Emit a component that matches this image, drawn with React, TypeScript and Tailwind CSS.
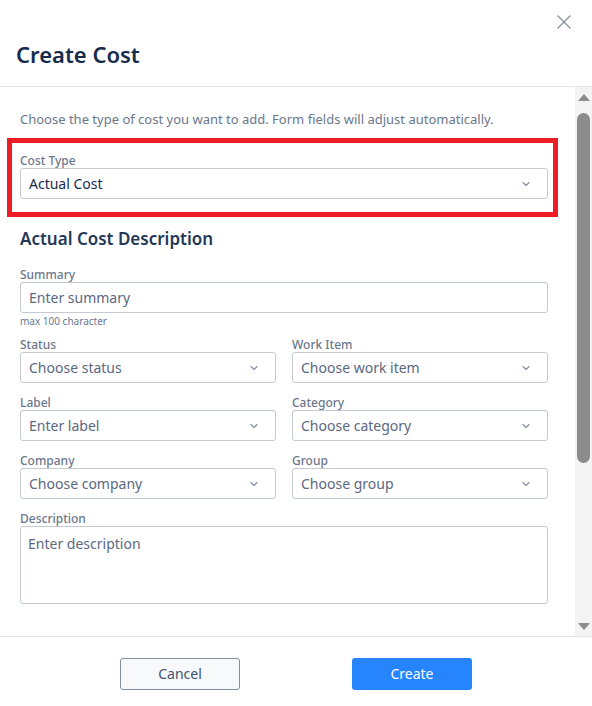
import { X, ChevronDown } from 'lucide-react';

const font = { fontFamily: '"Noto Sans", "Open Sans", Arial, sans-serif' };

function SelectBox({ value, placeholder = true }: { value: string; placeholder?: boolean }) {
  return (
    <div className="flex h-[31px] items-center justify-between rounded-[3px] border border-[#c4c9d2] bg-white pl-2 pr-[15px]">
      <span className={`text-[14px] leading-5 ${placeholder ? 'text-[#5b6882]' : 'text-[#172b4d]'}`}>{value}</span>
      <ChevronDown size={12} strokeWidth={2.5} className="text-[#8b93a5]" />
    </div>
  );
}

function Field({ label, value }: { label: string; value: string }) {
  return (
    <div className="flex flex-col">
      <label className="text-[12px] font-medium leading-[15px] text-[#6b778c]">{label}</label>
      <SelectBox value={value} />
    </div>
  );
}

export default function App() {
  return (
    <div className="flex h-[706px] w-[592px] flex-col bg-white" style={font}>
      <div className="relative h-[87px] shrink-0 border-b border-[#e1e4ea]">
        <h1 className="absolute left-[16px] top-[38px] text-[22px] font-semibold leading-8 text-[#172b4d]">Create Cost</h1>
        <button className="absolute right-[16px] top-[10px] text-[#8993a4]">
          <X size={24} strokeWidth={1.4} />
        </button>
      </div>

      <div className="flex min-h-0 flex-1">
        <div className="min-w-0 flex-1 overflow-hidden pl-[20px] pr-[27px] pt-[22px]">
          <p className="text-[13px] leading-5 text-[#6b778c]">
            Choose the type of cost you want to add. Form fields will adjust automatically.
          </p>

          <div className="-ml-[13px] -mr-[10px] mt-[9px] border-[5px] border-[#ee1c25] pb-[13px] pl-[8px] pr-[5px] pt-[10px]">
            <label className="block text-[12px] font-medium leading-[15px] text-[#6b778c]">Cost Type</label>
            <SelectBox value="Actual Cost" placeholder={false} />
          </div>

          <h2 className="mt-[9px] text-[17px] font-semibold leading-[26px] text-[#253858]">Actual Cost Description</h2>

          <div className="mt-[15px] flex flex-col">
            <label className="text-[12px] font-medium leading-[15px] text-[#6b778c]">Summary</label>
            <div className="flex h-[31px] items-center rounded-[3px] border border-[#c4c9d2] px-2">
              <span className="text-[14px] leading-5 text-[#5b6882]">Enter summary</span>
            </div>
            <span className="mt-[2px] text-[10px] leading-[12px] text-[#6b778c]">max 100 character</span>
          </div>

          <div className="mt-[10px] grid grid-cols-2 gap-x-[16px] gap-y-[12px]">
            <Field label="Status" value="Choose status" />
            <Field label="Work Item" value="Choose work item" />
            <Field label="Label" value="Enter label" />
            <Field label="Category" value="Choose category" />
            <Field label="Company" value="Choose company" />
            <Field label="Group" value="Choose group" />
          </div>

          <div className="mt-[13px] flex flex-col">
            <label className="text-[12px] font-medium leading-[14px] text-[#6b778c]">Description</label>
            <div className="h-[78px] rounded-[3px] border border-[#c4c9d2] px-[7px] py-[4px]">
              <span className="text-[14px] leading-5 text-[#5b6882]">Enter description</span>
            </div>
          </div>

          <h2 className="mt-[29px] text-[17px] font-semibold leading-[26px] text-[#253858]">Actual Cost Details</h2>
        </div>

        <div className="flex w-[17px] shrink-0 flex-col items-center bg-[#f4f4f4] pb-[6px] pt-[7px]">
          <div className="h-0 w-0 border-x-[6px] border-b-[7px] border-x-transparent border-b-[#8c8c8c]" />
          <div className="mt-[12px] h-[350px] w-[13px] rounded-full bg-[#8c8c8c]" />
          <div className="flex-1" />
          <div className="h-0 w-0 border-x-[6px] border-t-[7px] border-x-transparent border-t-[#8c8c8c]" />
        </div>
      </div>

      <div className="flex h-[70px] shrink-0 items-center justify-center gap-[112px] border-t border-[#e1e4ea] pt-[4px]">
        <button className="h-[32px] w-[120px] rounded-[3px] border border-[#8190a5] bg-[#f8f9fb] text-[14px] text-[#42526e]">Cancel</button>
        <button className="h-[32px] w-[120px] rounded-[3px] bg-[#2684ff] text-[14px] text-white">Create</button>
      </div>
    </div>
  );
}
